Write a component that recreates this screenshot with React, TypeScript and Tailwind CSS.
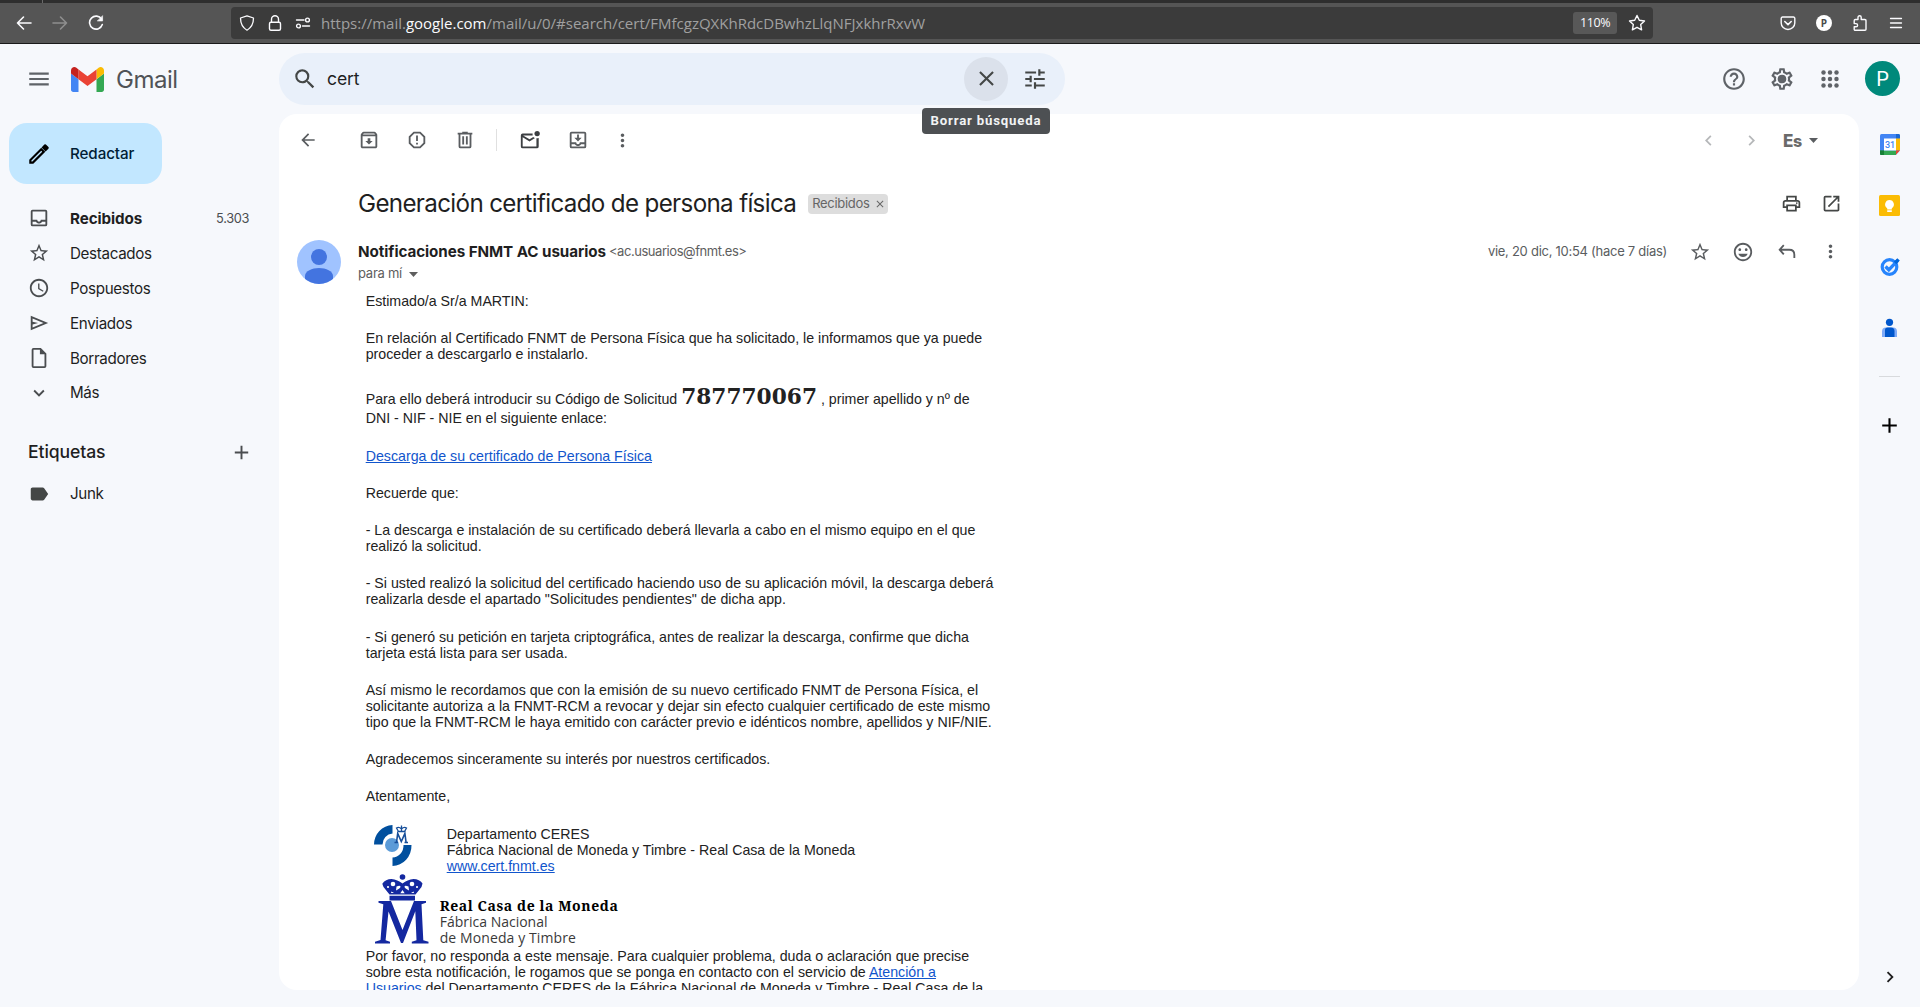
import React from 'react';
import {
  MdAccessTime, MdAdd, MdApps, MdArrowBack, MdChevronLeft, MdChevronRight, MdClose, MdExpandMore,
  MdHelpOutline, MdLabel, MdMenu, MdMoreVert, MdOpenInNew, MdOutlineArchive, MdOutlineInsertEmoticon, MdOutlinePrint,
  MdOutlineSettings, MdReportGmailerrorred, MdSearch, MdStarOutline, MdTune,
} from 'react-icons/md';

const stroke = { fill: 'none', stroke: 'currentColor', strokeLinecap: 'round', strokeLinejoin: 'round' } as const;

function BrowserBar() {
  return (
    <div className="h-11 shrink-0 border-b border-[#1a1a1a] bg-[#555555] text-[#fbfbfe]">
      <div className="flex h-[3px] bg-[#2e2e2e]"><div className="ml-[42px] w-px bg-[#6a6a6a]" /></div>
      <div className="flex h-10 items-center font-['Open_Sans',sans-serif]">
        <div className="ml-[6px] flex w-[225px] items-center">
          <div className="flex w-9 justify-center">
            <svg width="16" height="16" viewBox="0 0 16 16" {...stroke} strokeWidth="1.6"><path d="M15 8H1.5M7.5 2l-6 6 6 6" /></svg>
          </div>
          <div className="flex w-9 justify-center text-[#8f8f8f]">
            <svg width="16" height="16" viewBox="0 0 16 16" {...stroke} strokeWidth="1.6"><path d="M1 8h13.5M8.5 2l6 6-6 6" /></svg>
          </div>
          <div className="flex w-9 justify-center">
            <svg width="16" height="16" viewBox="0 0 16 16" {...stroke} strokeWidth="1.6"><path d="M13.6 4.2A6.5 6.5 0 1 0 14.3 9.500" /><path d="M14.6 1v5h-5z" fill="currentColor" strokeWidth=".6" /></svg>
          </div>
        </div>
        <div className="flex h-8 w-[1422px] items-center rounded-[4px] bg-[#3b3b3b]">
          <div className="ml-[2px] flex w-7 justify-center">
            <svg width="16" height="16" viewBox="0 0 16 16" {...stroke} strokeWidth="1.3"><path d="M8 .8l6.500 2.200c0 6-2 9.500-6.500 12.200C3.500 12.500 1.500 9 1.500 3z" /></svg>
          </div>
          <div className="flex w-7 justify-center">
            <svg width="16" height="16" viewBox="0 0 16 16" {...stroke} strokeWidth="1.4"><rect x="2.500" y="7.300" width="11" height="8" rx="1.500" /><path d="M4.500 7V4.200a3.500 3.500 0 0 1 7 0V7" /></svg>
          </div>
          <div className="flex w-7 justify-center">
            <svg width="16" height="16" viewBox="0 0 16 16" {...stroke} strokeWidth="1.4"><path d="M1.500 5H9M7.500 11H14.500" /><circle cx="12.500" cy="5" r="1.900" /><circle cx="3.500" cy="11" r="1.900" /></svg>
          </div>
          <div className="ml-[4px] text-[15px] leading-5 whitespace-nowrap text-[#a0a0a0]">
            https://mail.<span className="text-[#fbfbfe]">google.com</span>/mail/u/0/#search/cert/FMfcgzQXKhRdcDBwhzLlqNFJxkhrRxvW
          </div>
          <div className="ml-auto flex h-[22px] w-11 items-center justify-center rounded-[3px] bg-[#585858] text-[12.500px] tracking-[-0.4px]">110%</div>
          <div className="mr-[6px] ml-[10px]">
            <svg width="20" height="20" viewBox="0 0 20 20" {...stroke} strokeWidth="1.400"><path d="M10 2.500l2.300 4.800 5.200.7-3.800 3.600.9 5.200-4.600-2.500-4.600 2.500.9-5.200L2.500 8l5.200-.7z" /></svg>
          </div>
        </div>
        <div className="ml-auto flex pr-[6px]">
          <div className="flex w-9 justify-center">
            <svg width="16" height="16" viewBox="0 0 16 16" {...stroke} strokeWidth="1.400"><path d="M2.500 2h11a1.300 1.300 0 0 1 1.300 1.300V8a6.800 6.500 0 0 1-13.600 0V3.300A1.300 1.300 0 0 1 2.500 2z" /><path d="M4.800 6.500L8 9.600l3.200-3.100" strokeWidth="1.600" /></svg>
          </div>
          <div className="flex w-9 justify-center">
            <div className="flex size-4 items-center justify-center rounded-full bg-white text-[10px] leading-none font-bold text-[#4a4a4a]">P</div>
          </div>
          <div className="flex w-9 justify-center">
            <svg width="16" height="16" viewBox="0 0 16 16" {...stroke} strokeWidth="1.400"><path d="M6 4.500V2.300a1.600 1.600 0 0 1 3.200 0v2.200h3.600a1.200 1.200 0 0 1 1.200 1.200v8.600a1 1 0 0 1-1 1H3.200a1 1 0 0 1-1-1v-2.500H4a1.600 1.600 0 0 0 0-3.200H2.200V5.700a1.200 1.200 0 0 1 1.200-1.200z" /></svg>
          </div>
          <div className="flex w-9 justify-center">
            <svg width="16" height="16" viewBox="0 0 16 16" {...stroke} strokeWidth="1.300"><path d="M2.500 3.500h11M2.500 8h11M2.500 12.500h11" /></svg>
          </div>
        </div>
      </div>
    </div>
  );
}

function Header() {
  return (
    <header className="flex h-[70px] shrink-0 items-center text-[#5f6368]">
      <div className="flex w-[279px] items-center">
        <MdMenu className="ml-[26px] size-[26px]" />
        <svg className="ml-[19px]" width="33" height="25" viewBox="52 42 88 66">
          <path fill="#4285f4" d="M58 108h14V74L52 59v43c0 3.320 2.690 6 6 6" />
          <path fill="#34a853" d="M120 108h14c3.320 0 6-2.690 6-6V59l-20 15" />
          <path fill="#fbbc04" d="M120 48v26l20-15v-8c0-7.420-8.470-11.650-14.400-7.200" />
          <path fill="#ea4335" d="M72 74V48l24 18 24-18v26L96 92" />
          <path fill="#c5221f" d="M52 51v8l20 15V48l-5.600-4.200c-5.940-4.450-14.400-.22-14.400 7.200" />
        </svg>
        <span className="mt-px ml-[12px] text-[24px] leading-8 tracking-[-0.5px] text-[#505357]">Gmail</span>
      </div>
      <div className="flex h-[52px] w-[786px] items-center rounded-full bg-[#e9f0fa] text-[#444746]">
        <MdSearch className="ml-[13px] size-[26px]" />
        <span className="ml-[9px] text-[17.600px] tracking-[-0.15px] text-[#1f1f1f]">cert</span>
        <div className="relative mb-px ml-auto flex size-11 items-center justify-center rounded-full bg-[#dbe1eb]">
          <MdClose className="size-[25px]" />
          <div className="absolute top-[51px] left-1/2 z-10 flex h-[26px] w-32 -translate-x-1/2 items-center justify-center rounded-[4px] bg-[#4d5053] font-['Roboto',sans-serif] text-[13.200px] font-bold tracking-[0.82px] whitespace-nowrap text-[#f1f3f4]">
            Borrar búsqueda
          </div>
        </div>
        <MdTune className="mr-[17px] mb-px ml-[14px] size-[26px]" />
      </div>
      <div className="ml-auto flex items-center pr-5">
        <div className="flex w-12 justify-center"><MdHelpOutline className="size-[26px]" /></div>
        <div className="relative flex w-12 items-center justify-center">
          <MdOutlineSettings className="size-[26px]" />
          <div className="absolute size-2 rounded-full bg-[#5f6368]" />
        </div>
        <div className="flex w-12 justify-center">
          <svg width="26" height="26" viewBox="0 0 24 24" fill="currentColor">
            {[6, 12, 18].map((y) => [6, 12, 18].map((x) => <circle key={`${x}-${y}`} cx={x} cy={y} r="2.050" />))}
          </svg>
        </div>
        <div className="mb-px ml-[11px] flex size-[35px] items-center justify-center rounded-full bg-[#00897b] font-['Roboto',sans-serif] text-[20px] text-white">P</div>
      </div>
    </header>
  );
}

function InboxIcon() {
  return <svg width="22" height="22" viewBox="0 0 24 24" fill="currentColor"><path d="M19 3H5a2 2 0 0 0-2 2v14a2 2 0 0 0 2 2h14a2 2 0 0 0 2-2V5a2 2 0 0 0-2-2zm0 16H5v-3h3.600c.7 1.200 2 2 3.400 2s2.700-.8 3.400-2H19v3zm0-5h-5a2 2 0 0 1-4 0H5V5h14v9z" /></svg>;
}
function SendIcon() {
  return <svg width="22" height="22" viewBox="0 0 24 24" fill="currentColor"><path d="M3 4v16l19-8L3 4zm2 3l11.900 5L5 17v-3.500l6-1.500-6-1.500V7z" /></svg>;
}
function DraftIcon() {
  return <svg width="22" height="22" viewBox="0 0 24 24" fill="currentColor"><path d="M14 1H6a2 2 0 0 0-2 2v18a2 2 0 0 0 2 2h12a2 2 0 0 0 2-2V7l-6-6zm4 20H6V3h7v5h5v13z" /></svg>;
}
function Caret() {
  return <svg width="9" height="5" viewBox="0 0 9 5" fill="currentColor"><path d="M0 0h9L4.500 5z" /></svg>;
}

const folders = [
  { label: 'Destacados', icon: <MdStarOutline className="size-[22px]" /> },
  { label: 'Pospuestos', icon: <MdAccessTime className="size-[22px]" /> },
  { label: 'Enviados', icon: <SendIcon /> },
  { label: 'Borradores', icon: <DraftIcon /> },
  { label: 'Más', icon: <MdExpandMore className="size-[22px]" /> },
];

function Sidebar() {
  return (
    <aside className="w-[279px] shrink-0 pt-[9px] text-[15.200px] tracking-[-0.35px] text-[#1f1f1f]">
      <div className="ml-[9px] flex h-[61px] w-[153px] items-center rounded-[18px] bg-[#c2e7ff] text-[#001d35]">
        <svg className="ml-[17px]" width="26" height="26" viewBox="0 0 24 24" fill="black"><path d="M3 17.250V21h3.750L17.810 9.940l-3.750-3.750L3 17.250zM5.920 19H5v-.92l9.060-9.060.92.92L5.920 19zM20.710 5.630l-2.340-2.340a1 1 0 0 0-1.410 0l-2.600 2.600 3.750 3.750 2.600-2.600a1 1 0 0 0 0-1.410z" /></svg>
        <span className="mt-[2px] ml-[18px] font-medium tracking-[-0.1px]">Redactar</span>
      </div>
      <nav className="mt-[17px] text-[#4a4d50]">
        <div className="flex h-[35px] items-center pl-[28px]">
          <div className="mb-px"><InboxIcon /></div>
          <span className="mt-[2px] ml-5 font-bold tracking-[-0.1px] text-[#1f1f1f]">Recibidos</span>
          <span className="mt-px mr-[30px] ml-auto text-[12.800px]">5.303</span>
        </div>
        {folders.map((f) => (
          <div key={f.label} className="flex h-[35px] items-center pl-[28px]">
            <div className="mb-px">{f.icon}</div>
            <span className={f.label === 'Más' ? 'ml-5 text-[#1f1f1f]' : 'mt-[2px] ml-5 text-[#1f1f1f]'}>{f.label}</span>
          </div>
        ))}
      </nav>
      <div className="mt-[21px] flex h-10 items-center justify-between pr-[26px] pl-[28px]">
        <span className="text-[17.600px] font-medium tracking-[-0.1px]">Etiquetas</span>
        <MdAdd className="size-[23px] text-[#4a4d50]" />
      </div>
      <div className="mt-[4px] flex h-[35px] items-center pl-[28px]">
        <MdLabel className="size-[22px] text-[#444746]" />
        <span className="mt-[2px] ml-5">Junk</span>
      </div>
    </aside>
  );
}

function Toolbar() {
  return (
    <div className="flex h-[52px] items-center pl-[9px] text-[#5a5d60]">
      <div className="mr-[17px] flex w-10 justify-center"><MdArrowBack className="size-[20px]" /></div>
      <div className="flex w-12 justify-center"><MdOutlineArchive className="size-[22px]" /></div>
      <div className="flex w-12 justify-center"><MdReportGmailerrorred className="size-[22px]" /></div>
      <div className="flex w-12 justify-center">
        <svg width="22" height="22" viewBox="0 0 24 24" fill="currentColor"><path d="M15 4V3H9v1H4v2h1v13a2 2 0 0 0 2 2h10a2 2 0 0 0 2-2V6h1V4h-5zm2 15H7V6h10v13zM9 8h2v9H9V8zm4 0h2v9h-2V8z" /></svg>
      </div>
      <div className="mr-[9px] ml-[7px] h-[22px] w-px bg-[#e0e0e0]" />
      <div className="flex w-12 justify-center text-[#3c3f42]">
        <svg width="22" height="22" viewBox="0 0 24 24" fill="currentColor"><circle cx="19.800" cy="5" r="2.900" /><path d="M19 10.500V19H4V9l7.500 4.700 6-3.800a5 5 0 0 1-1.900-1.200l-4.100 2.600L4.500 7H14.900a5 5 0 0 1 0-2H4a2 2 0 0 0-2 2v12a2 2 0 0 0 2 2h15.500a2 2 0 0 0 2-2V9.700a5 5 0 0 1-2.500.4z" /></svg>
      </div>
      <div className="flex w-12 justify-center">
        <svg width="22" height="22" viewBox="0 0 24 24" fill="currentColor"><path d="M19 3H5a2 2 0 0 0-2 2v14a2 2 0 0 0 2 2h14a2 2 0 0 0 2-2V5a2 2 0 0 0-2-2zm0 16H5v-2.500h3.600c.7 1.200 2 2 3.400 2s2.700-.8 3.400-2H19V19zm0-4.500h-5a2 2 0 0 1-4 0H5V5h14v9.500zM16 9.500h-3V6h-2v3.500H8l4 4 4-4z" /></svg>
      </div>
      <div className="flex w-10 justify-center"><MdMoreVert className="size-[21px]" /></div>
      <div className="ml-auto flex items-center pr-[41px]">
        <MdChevronLeft className="size-[21px] text-[#b5b7b9]" />
        <MdChevronRight className="ml-[22px] size-[21px] text-[#b5b7b9]" />
        <span className="mt-[4px] ml-[21px] w-5 text-[17px] font-extrabold tracking-[-0.5px] text-[#6a6a6a]">E<span className="text-[16px]">s</span></span>
        <div className="ml-[6px]"><Caret /></div>
      </div>
    </div>
  );
}

function CeresLogo() {
  return (
    <svg className="ml-[7px] block" width="40" height="43" viewBox="0 0 40 43">
      <path d="M1 20.500A19.500 19.500 0 0 1 19.500 1v8.500A11 11 0 0 0 9.500 20.500z" fill="#004f9e" />
      <path d="M38.500 21A19.500 20.500 0 0 1 19.500 42v-8.500A11 12 0 0 0 30.500 21z" fill="#004f9e" />
      <circle cx="19" cy="21" r="7" fill="#5b9bd8" />
      <g fill="none" stroke="#174f9a">
        <path d="M21.500 18.500h3.500M31.500 18.500h3.500M23.500 18.500l1.200-9 3.600 8 3.600-8 1.200 9" strokeWidth="1.600" />
        <path d="M25.500 7.500l-2-3.500q2.500-1.500 5 1 2.500-2.500 5-1l-2 3.500zM28.500 1.500V7" strokeWidth="1.300" />
      </g>
    </svg>
  );
}

function MintLogo() {
  return (
    <svg width="56" height="70" viewBox="0 0 56 70">
      <g fill="#1428a0">
        <path d="M4.500 27H17l11.500 29L40 27h12v1.800l-4.500 1.400 1.800 36 5.200 1.500V69.500H37.800v-1.800l4.700-1.500-1.200-29L29 69h-2L14.500 37.500 11.600 66.200l4.400 1.500v1.800H1v-1.800l5.500-1.700L9.300 30.200l-4.800-1.400z" />
        <path d="M15.500 21.800h25.500v4.700H15.500z" />
        <path d="M15.500 20.500L9.500 13q-1.500-4-1-3.500 3-4.500 9-4.500 6 .5 11 4.500 5-4 11-4.500 6 0 9 4.500l-1 3.500-6 7.500z" />
        <circle cx="28.500" cy="3" r="2.800" />
      </g>
      <g fill="white">
        <circle cx="19" cy="10" r="2.300" />
        <circle cx="38" cy="10" r="2.300" />
        <path d="M22.500 12.500q3.500-1.500 4 0t-4.500 4zM34.500 12.500q-3.500-1.500-4 0t4.500 4z" />
        <circle cx="14" cy="13" r="1.100" />
        <circle cx="43" cy="13" r="1.100" />
        <path d="M17.500 17.500l2.500 1.600h-3zM39.500 17.500L37 19.100h3zM28.500 16l2.200 3.200h-4.400z" />
      </g>
    </svg>
  );
}

function Link({ children }: { children: React.ReactNode }) {
  return <a className="text-[#1155cc] underline">{children}</a>;
}

function MailBody() {
  return (
    <div className="w-[640px] font-['Liberation_Sans',Arial,sans-serif] text-[14.200px] leading-4 whitespace-nowrap text-[#222222]">
      <p>Estimado/a Sr/a MARTIN:</p>
      <p className="mt-[21px]">En relación al Certificado FNMT de Persona Física que ha solicitado, le informamos que ya puede<br />proceder a descargarlo e instalarlo.</p>
      <p className="mt-[23px]">
        <span className="block h-[25px] leading-6">Para ello deberá introducir su Código de Solicitud <b className="font-['DejaVu_Serif',serif] text-[21.700px] leading-6">787770067</b> , primer apellido y nº de</span>
        <span className="block">DNI - NIF - NIE en el siguiente enlace:</span>
      </p>
      <p className="mt-[22px]"><Link>Descarga de su certificado de Persona Física</Link></p>
      <p className="mt-[21px]">Recuerde que:</p>
      <p className="mt-[21px]">- La descarga e instalación de su certificado deberá llevarla a cabo en el mismo equipo en el que<br />realizó la solicitud.</p>
      <p className="mt-[21px]">- Si usted realizó la solicitud del certificado haciendo uso de su aplicación móvil, la descarga deberá<br />realizarla desde el apartado "Solicitudes pendientes" de dicha app.</p>
      <p className="mt-[22px]">- Si generó su petición en tarjeta criptográfica, antes de realizar la descarga, confirme que dicha<br />tarjeta está lista para ser usada.</p>
      <p className="mt-[21px]">Así mismo le recordamos que con la emisión de su nuevo certificado FNMT de Persona Física, el<br />solicitante autoriza a la FNMT-RCM a revocar y dejar sin efecto cualquier certificado de este mismo<br />tipo que la FNMT-RCM le haya emitido con carácter previo e idénticos nombre, apellidos y NIF/NIE.</p>
      <p className="mt-[21px]">Agradecemos sinceramente su interés por nuestros certificados.</p>
      <p className="mt-[21px]">Atentamente,</p>
      <div className="mt-[20px] flex h-[50px]">
        <CeresLogo />
        <div className="ml-[34px] pt-[2px]">
          Departamento CERES<br />Fábrica Nacional de Moneda y Timbre - Real Casa de la Moneda<br /><Link>www.cert.fnmt.es</Link>
        </div>
      </div>
      <div className="flex h-[74px] pl-[8px]">
        <MintLogo />
        <div className="ml-[10px] pt-[24px] font-['Open_Sans',sans-serif] text-[14px] leading-4 text-[#3a3a3a]">
          <div className="font-['Noto_Serif',serif] text-[14px] font-bold tracking-[0.58px] text-black">Real Casa de la Moneda</div>
          <div>Fábrica Nacional</div>
          <div className="tracking-[0.1px]">de Moneda y Timbre</div>
        </div>
      </div>
      <p>Por favor, no responda a este mensaje. Para cualquier problema, duda o aclaración que precise<br />sobre esta notificación, le rogamos que se ponga en contacto con el servicio de <Link>Atención a</Link><br /><Link>Usuarios</Link> del Departamento CERES de la Fábrica Nacional de Moneda y Timbre - Real Casa de la</p>
    </div>
  );
}

function Mail() {
  return (
    <main className="h-[876px] w-[1580px] shrink-0 overflow-hidden rounded-[18px] bg-white">
      <Toolbar />
      <div className="flex h-[74px] items-center pl-[79px] text-[#1f1f1f]">
        <h1 className="mt-[2px] text-[24.200px] tracking-[-0.67px]">Generación certificado de persona física</h1>
        <div className="mt-px ml-[12px] flex h-5 w-20 items-center rounded-[4px] bg-[#dddddd] pl-[4px] text-[13px] tracking-[-0.3px] text-[#666666]">
          Recibidos<MdClose className="mt-px ml-[4px] size-[12px]" />
        </div>
        <div className="ml-auto flex pr-[8px] text-[#444746]">
          <div className="flex w-10 justify-center"><MdOutlinePrint className="size-[21px]" /></div>
          <div className="flex w-10 justify-center"><MdOpenInNew className="size-[21px]" /></div>
        </div>
      </div>
      <div className="flex h-[53px]">
        <svg className="ml-[17.500px] shrink-0" width="44" height="44" viewBox="0 0 44 44">
          <clipPath id="face"><circle cx="22" cy="22" r="22" /></clipPath>
          <g clipPath="url(#face)">
            <rect width="44" height="44" fill="#a0c3ff" />
            <circle cx="22" cy="17" r="8" fill="#4374e0" />
            <path d="M8 46V36c0-5 7-8 14-8s14 3 14 8v10z" fill="#4374e0" />
          </g>
        </svg>
        <div className="ml-[17.500px] text-[13px] text-[#5e5e5e]">
          <div className="flex h-[24px] items-center whitespace-nowrap">
            <span className="mt-px text-[15.200px] font-bold tracking-[-0.07px] text-[#1f1f1f]">Notificaciones FNMT AC usuarios</span>
            <span className="ml-[3px] tracking-[-0.45px]">&lt;ac.usuarios@fnmt.es&gt;</span>
          </div>
          <div className="flex h-5 items-center tracking-[-0.25px]">para mí<span className="ml-[7px]"><Caret /></span></div>
        </div>
        <div className="ml-auto flex h-[23px] items-center pr-[9px] text-[#5a5d60]">
          <span className="mr-[13px] text-[13px] tracking-[-0.27px]">vie, 20 dic, 10:54 (hace 7 días)</span>
          <div className="flex w-10 justify-center"><MdStarOutline className="size-[22px]" /></div>
          <div className="ml-[3px] flex w-10 justify-center"><MdOutlineInsertEmoticon className="size-[22px]" /></div>
          <div className="ml-1 flex w-10 justify-center">
            <svg width="22" height="22" viewBox="0 0 24 24" fill="none" stroke="currentColor" strokeWidth="2"><path d="M8.500 4.500L4 9.500l4.500 5M4 9.500h10.500q5.500 0 5.500 5.500v3.500" /></svg>
          </div>
          <div className="ml-[3px] flex w-10 justify-center"><MdMoreVert className="size-[21px]" /></div>
        </div>
      </div>
      <div className="pl-[86.700px]"><MailBody /></div>
    </main>
  );
}

function SidePanel() {
  return (
    <aside className="flex h-[876px] grow flex-col items-center">
      <svg className="mt-[20px]" width="20" height="21" viewBox="0 0 20 21">
        <rect width="20" height="21" rx="1.500" fill="#4285f4" />
        <path d="M16 0h2.500A1.500 1.500 0 0 1 20 1.500V4.500h-4z" fill="#1967d2" />
        <path d="M16 4.500h4v12h-4z" fill="#fbbc04" />
        <path d="M0 16.500h16V21H1.500A1.500 1.500 0 0 1 0 19.500z" fill="#34a853" />
        <path d="M0 16.500h4V21H1.500A1.500 1.500 0 0 1 0 19.500z" fill="#188038" />
        <path d="M16 16.500h4L16 21z" fill="#ea4335" />
        <path d="M20 16.500V21h-4z" fill="#f6f8fc" />
        <rect x="4" y="4.500" width="12" height="12" fill="white" />
        <text x="10" y="14" textAnchor="middle" fontFamily="Roboto" fontSize="9" fontWeight="500" fill="#4285f4">31</text>
      </svg>
      <svg className="mt-[40px]" width="21" height="21" viewBox="0 0 21 21">
        <rect width="21" height="21" rx="1.500" fill="#fbbc04" />
        <path d="M10.500 5a4.500 4.500 0 0 0-2.300 8.300V14.500h4.600v-1.200A4.500 4.500 0 0 0 10.500 5zM8.200 15.300h4.600V17H8.200z" fill="white" />
      </svg>
      <svg className="mt-[40px]" width="21" height="21" viewBox="0 0 21 21">
        <circle cx="10.500" cy="11" r="7.300" fill="none" stroke="#2684fc" strokeWidth="3.200" />
        <path d="M6.500 10.500l3.300 3.300 9-9.500" fill="none" stroke="#2684fc" strokeWidth="3.400" />
        <path d="M14.800 5.700l3.500-3.500 2.500 2.400-3.500 3.600z" fill="#0066da" />
      </svg>
      <svg className="mt-[40px]" width="21" height="21" viewBox="0 0 21 21">
        <circle cx="10.500" cy="5.300" r="3.600" fill="#0057cc" />
        <path d="M7 10.500h7a4 4 0 0 1 4 4V20H3v-5.500a4 4 0 0 1 4-4z" fill="#7fabf8" />
        <path d="M8.500 10.500H12a3.500 3.500 0 0 1 3.500 3.500v6H6v-7a2.500 2.500 0 0 1 2.500-2.500z" fill="#0057cc" />
      </svg>
      <div className="mt-[38px] h-px w-[21px] bg-[#d8dadd]" />
      <MdAdd className="mt-[36px] size-[25px] text-black" />
      <MdChevronRight className="mt-auto mb-[2px] size-[22px] text-[#1f1f1f]" />
    </aside>
  );
}

export default function App() {
  return (
    <div className="flex h-[1007px] w-[1920px] flex-col overflow-hidden bg-[#f6f8fc] font-['Inter',sans-serif]">
      <BrowserBar />
      <Header />
      <div className="flex">
        <Sidebar />
        <Mail />
        <SidePanel />
      </div>
    </div>
  );
}
